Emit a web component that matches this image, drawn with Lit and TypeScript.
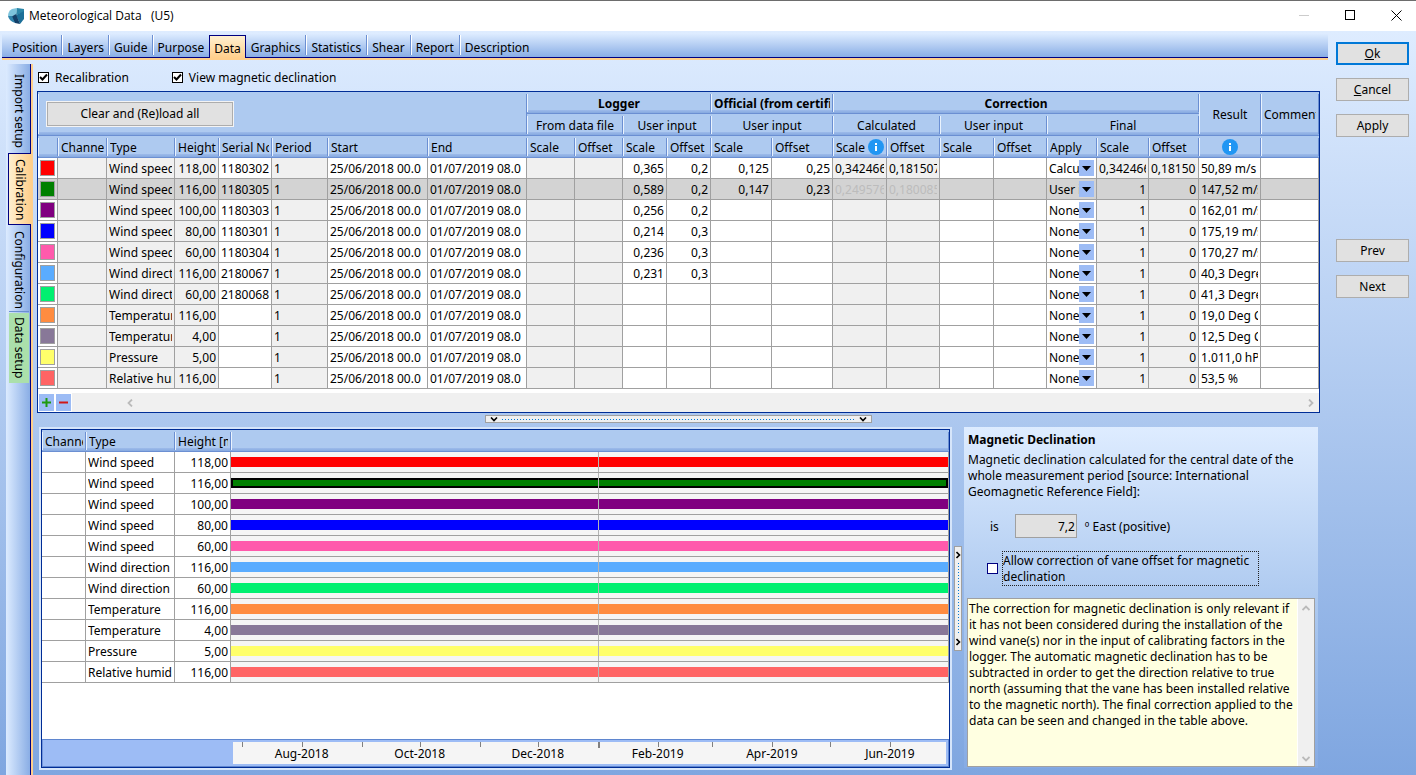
import { LitElement, html, css, svg, nothing } from "lit";
import { customElement, property, state } from "lit/decorators.js";
import { classMap } from "lit/directives/class-map.js";
import { styleMap } from "lit/directives/style-map.js";

interface Signal {
  color: string;
  type: string;
  height: string;
  serial: string;
  input: [string, string];
  official: [string, string];
  calculated: [string, string];
  apply: string;
  final: [string, string];
  result: string;
}

const none: [string, string] = ["", ""];
const unit: [string, string] = ["1", "0"];

const signals: Signal[] = [
  { color: "#ff0000", type: "Wind speed", height: "118,00", serial: "1180302", input: ["0,365", "0,2"], official: ["0,125", "0,25"], calculated: ["0,342466", "0,181507"], apply: "Calculated", final: ["0,342466", "0,181507"], result: "50,89 m/s" },
  { color: "#008000", type: "Wind speed", height: "116,00", serial: "1180305", input: ["0,589", "0,2"], official: ["0,147", "0,23"], calculated: ["0,249576", "0,180085"], apply: "User input", final: unit, result: "147,52 m/s" },
  { color: "#800080", type: "Wind speed", height: "100,00", serial: "1180303", input: ["0,256", "0,2"], official: none, calculated: none, apply: "None", final: unit, result: "162,01 m/s" },
  { color: "#0000ff", type: "Wind speed", height: "80,00", serial: "1180301", input: ["0,214", "0,3"], official: none, calculated: none, apply: "None", final: unit, result: "175,19 m/s" },
  { color: "#ff5aac", type: "Wind speed", height: "60,00", serial: "1180304", input: ["0,236", "0,3"], official: none, calculated: none, apply: "None", final: unit, result: "170,27 m/s" },
  { color: "#5aacff", type: "Wind direction", height: "116,00", serial: "2180067", input: ["0,231", "0,3"], official: none, calculated: none, apply: "None", final: unit, result: "40,3 Degrees" },
  { color: "#00f070", type: "Wind direction", height: "60,00", serial: "2180068", input: none, official: none, calculated: none, apply: "None", final: unit, result: "41,3 Degrees" },
  { color: "#ff8c40", type: "Temperature", height: "116,00", serial: "", input: none, official: none, calculated: none, apply: "None", final: unit, result: "19,0 Deg C" },
  { color: "#887898", type: "Temperature", height: "4,00", serial: "", input: none, official: none, calculated: none, apply: "None", final: unit, result: "12,5 Deg C" },
  { color: "#ffff6a", type: "Pressure", height: "5,00", serial: "", input: none, official: none, calculated: none, apply: "None", final: unit, result: "1.011,0 hPa" },
  { color: "#ff6464", type: "Relative humidity", height: "116,00", serial: "", input: none, official: none, calculated: none, apply: "None", final: unit, result: "53,5 %" },
];

const columnWidths = [20, 49, 68, 44, 53, 56, 100, 99, 48, 48, 44, 44, 61, 61, 54, 53, 54, 53, 50, 52, 50, 62, 58];
const columnTotal = columnWidths.reduce((a, b) => a + b, 0);

const shared = css`
  * { box-sizing: border-box; }
  button, input, select, textarea { font: inherit; color: inherit; margin: 0; border-radius: 0; }
  table { border-collapse: separate; border-spacing: 0; table-layout: fixed; width: 100%; }
  th {
    height: 22px; padding: 1px 3px 0; font-weight: normal; text-align: left; line-height: 16px;
    border-bottom: 1px solid #6b8fd2;
    background:
      linear-gradient(#6b8fd2, #6b8fd2) right 2px / 1px calc(100% - 3px) no-repeat,
      linear-gradient(#eaf3fe, #eaf3fe) left 2px / 1px calc(100% - 3px) no-repeat,
      linear-gradient(#9dbbea, #86a9e0) bottom / 100% 3px no-repeat,
      #aecaf0;
  }
  td {
    height: 21px; padding: 0 2px; line-height: 16px;
    border-right: 1px solid #a0a0a0; border-bottom: 1px solid #a0a0a0; background: #fff;
  }
  .clip { display: block; overflow: hidden; white-space: nowrap; padding-top: 2px; }
  .num { text-align: right; }
`;

const infoIcon = () => html`<svg class="info" width="16" height="16" viewBox="0 0 16 16" role="img" aria-label="Info">
  <circle cx="8" cy="8" r="8" fill="#2196f3" /><rect x="7" y="4" width="2" height="2" fill="#fff" /><rect x="7" y="7" width="2" height="5" fill="#fff" />
</svg>`;

@customElement("calibration-grid")
class CalibrationGrid extends LitElement {
  @property({ type: Number }) selected = 1;

  static styles = [shared, css`
    :host { display: block; border: 1px solid #002d96; background: #fff; }
    .center { text-align: center; }
    .bold { font-weight: bold; }
    .corner { padding: 0 8px; }
    .reload { width: 188px; height: 26px; border: 1px solid #f4f4f4; padding: 1px 0 0; background: #e1e1e1; outline: 1px solid #adadad; outline-offset: -2px; display: block; }
    .grey { background: #f0f0f0; }
    .selected td { background: #d3d3d3; }
    .dim { color: #bcbcbc; }
    .swatch { display: block; width: 15px; height: 16px; border: 1px solid #a0a0a0; }
    .with-info { display: flex; align-items: center; justify-content: space-between; }
    .with-info .clip { min-width: 0; }
    .info { display: block; flex: none; }
    .mid .info { margin: 0 auto; }
    .pick { display: grid; grid-template-columns: 1fr 15px; align-items: center; }
    .pick select { grid-area: 1 / 1 / 2 / 3; width: 100%; height: 20px; line-height: 16px; border: 0; padding: 1px 15px 0 0; background: none; appearance: none; text-overflow: clip; }
    .pick svg { grid-area: 1 / 2; pointer-events: none; }
    .foot { display: flex; align-items: flex-end; padding-top: 4px; background: #fff; }
    .tool { width: 15px; height: 17px; border: 0; padding: 0; margin: 1px 1px; background: #9dbcf5; display: grid; place-items: center; }
    .scroll { flex: 1; height: 19px; background: #f0f0f0; display: flex; justify-content: space-between; align-items: center; padding: 0 5px 0 55px; }
  `];

  private cell(text: string, cls = "") {
    return html`<td class=${cls}><span class="clip">${text}</span></td>`;
  }

  render() {
    const sub = ["", "Channel", "Type", "Height", "Serial No", "Period", "Start", "End", "Scale", "Offset", "Scale", "Offset", "Scale", "Offset", "Scale", "Offset", "Scale", "Offset", "Apply", "Scale", "Offset"];
    return html`
      <table>
        <colgroup>${columnWidths.map((w) => html`<col style=${styleMap({ width: `${(w / columnTotal) * 100}%` })} />`)}</colgroup>
        <thead>
          <tr>
            <th class="corner" colspan="8" rowspan="2"><button class="reload">Clear and (Re)load all</button></th>
            <th class="center bold" colspan="4"><span class="clip">Logger</span></th>
            <th class="bold" colspan="2"><span class="clip">Official (from certificate)</span></th>
            <th class="center bold" colspan="7"><span class="clip">Correction</span></th>
            <th class="center" rowspan="2"><span class="clip">Result</span></th>
            <th rowspan="2"><span class="clip">Comment</span></th>
          </tr>
          <tr>
            <th class="center" colspan="2"><span class="clip">From data file</span></th>
            <th class="center" colspan="2"><span class="clip">User input</span></th>
            <th class="center" colspan="2"><span class="clip">User input</span></th>
            <th class="center" colspan="2"><span class="clip">Calculated</span></th>
            <th class="center" colspan="2"><span class="clip">User input</span></th>
            <th class="center" colspan="3"><span class="clip">Final</span></th>
          </tr>
          <tr>
            ${sub.map((name, i) => i === 14
              ? html`<th><div class="with-info"><span class="clip">${name}</span>${infoIcon()}</div></th>`
              : html`<th><span class="clip">${name}</span></th>`)}
            <th class="mid">${infoIcon()}</th>
            <th></th>
          </tr>
        </thead>
        <tbody>
          ${signals.map((s, i) => html`
            <tr class=${classMap({ selected: i === this.selected })}>
              <td><span class="swatch" style=${styleMap({ background: s.color })}></span></td>
              ${this.cell("", "grey")}
              ${this.cell(s.type, "grey")}
              ${this.cell(s.height, "grey num")}
              ${this.cell(s.serial)}
              ${this.cell("1", "grey")}
              ${this.cell("25/06/2018 00.0")}
              ${this.cell("01/07/2019 08.0")}
              ${this.cell("", "grey")}
              ${this.cell("", "grey")}
              ${s.input.map((v) => this.cell(v, "num"))}
              ${s.official.map((v) => this.cell(v, "num"))}
              ${s.calculated.map((v) => this.cell(v, s.apply === "User input" ? "grey num dim" : "grey num"))}
              ${this.cell("")}
              ${this.cell("")}
              <td>
                <div class="pick">
                  <select aria-label="Apply" .value=${s.apply}>
                    ${["None", "Calculated", "User input"].map((o) => html`<option ?selected=${o === s.apply}>${o}</option>`)}
                  </select>
                  <svg width="15" height="16" viewBox="0 0 15 16"><rect width="15" height="16" fill="#9dbcf5" /><path d="M3 6h9L7.500 11z" fill="#000" /></svg>
                </div>
              </td>
              ${s.final.map((v) => this.cell(v, "grey num"))}
              ${this.cell(s.result)}
              ${this.cell("")}
            </tr>`)}
        </tbody>
      </table>
      <div class="foot">
        <button class="tool" aria-label="Add row"><svg width="9" height="9" viewBox="0 0 9 9"><path d="M4.500 0v9M0 4.500h9" stroke="#1f9a10" stroke-width="2" /></svg></button>
        <button class="tool" aria-label="Remove row"><svg width="9" height="9" viewBox="0 0 9 9"><path d="M0 4.500h9" stroke="#d01818" stroke-width="2" /></svg></button>
        <div class="scroll">
          <svg width="6" height="8" viewBox="0 0 6 8"><path d="M5 0.500L1.500 4L5 7.500" fill="none" stroke="#bababa" stroke-width="1.800" /></svg>
          <svg width="6" height="8" viewBox="0 0 6 8"><path d="M1 0.500L4.500 4L1 7.500" fill="none" stroke="#bababa" stroke-width="1.800" /></svg>
        </div>
      </div>`;
  }
}

const day = 86400000;
const dataStart = Date.UTC(2018, 5, 25);
const dataEnd = Date.UTC(2019, 6, 1);
const axisStart = dataStart + 1.5 * day;
const axisEnd = dataEnd - day;
const share = (t: number, from: number, to: number) => `${((t - from) / (to - from)) * 100}%`;

@customElement("signal-timeline")
class SignalTimeline extends LitElement {
  @property({ type: Number }) selected = 1;

  static styles = [shared, css`
    :host { display: flex; flex-direction: column; border: 1px solid #002d96; background: #fff; outline: 2px solid #d6e5fa; min-width: 0; }
    .c1 { width: 44px; } .c2 { width: 89px; } .c3 { width: 56px; }
    .track { padding: 0; background: #f5f5f5; }
    .lane { position: relative; height: 20px; padding: 5px 0; }
    .bar { height: 10px; }
    .bar.picked { border: 2px solid #000; }
    .year { position: absolute; top: 0; bottom: 0; width: 1px; background: #b4b4b4; }
    .axis { margin-top: auto; height: 28px; padding: 2px 2px 2px 190px; border: 1px solid #5f86cf; border-left-color: #7396dc; background: #9dbcf5; }
    .scale { position: relative; height: 22px; background: #f5f5f5; }
    .tick { position: absolute; top: 0; width: 1px; height: 5px; background: #808080; }
    .tick.major { width: 2px; height: 6px; }
    .month { position: absolute; top: 4px; line-height: 16px; transform: translateX(-50%); }
  `];

  render() {
    const months = Array.from({ length: 12 }, (_, i) => new Date(Date.UTC(2018, 6 + i, 1)));
    const label = (d: Date) => `${["Jan", "Feb", "Mar", "Apr", "May", "Jun", "Jul", "Aug", "Sep", "Oct", "Nov", "Dec"][d.getUTCMonth()]}-${d.getUTCFullYear()}`;
    const newYear = { left: share(Date.UTC(2019, 0, 1), dataStart, dataEnd) };
    return html`
      <table>
        <colgroup><col class="c1" /><col class="c2" /><col class="c3" /><col /></colgroup>
        <thead><tr>
          <th><span class="clip">Channel</span></th><th><span class="clip">Type</span></th><th><span class="clip">Height [m]</span></th><th></th>
        </tr></thead>
        <tbody>
          ${signals.map((s, i) => html`<tr>
            <td></td>
            <td><span class="clip">${s.type}</span></td>
            <td class="num"><span class="clip">${s.height}</span></td>
            <td class="track"><div class="lane">
              <div class=${classMap({ bar: true, picked: i === this.selected })} style=${styleMap({ background: s.color })}></div>
              <div class="year" style=${styleMap(newYear)}></div>
            </div></td>
          </tr>`)}
        </tbody>
      </table>
      <div class="axis"><div class="scale">
        ${months.map((m, i) => html`
          <span class=${classMap({ tick: true, major: m.getUTCMonth() === 0 })} style=${styleMap({ left: share(+m, axisStart, axisEnd) })}></span>
          ${i % 2 ? html`<span class="month" style=${styleMap({ left: share(+m, axisStart, axisEnd) })}>${label(m)}</span>` : nothing}`)}
      </div></div>`;
  }
}

@customElement("declination-panel")
class DeclinationPanel extends LitElement {
  static styles = [shared, css`
    :host { display: flex; flex-direction: column; padding: 5px 3px 1px; line-height: 16px; background: linear-gradient(#deecff, #aecaf0 50%, #86abe4); }
    .title { margin: 0; padding: 0 1px; font: inherit; font-weight: bold; }
    .lead { margin: 4px 0 0; padding: 0 1px; max-width: 340px; }
    .value { display: flex; align-items: center; margin-top: 14px; padding-left: 23px; }
    .value label, .value span { padding-top: 2px; }
    .value input { width: 62px; height: 24px; margin: 0 8px 0 16px; padding: 0 1px; text-align: right; border: 1px solid #a0a0a0; background: #e1e1e1; }
    .allow { display: flex; align-items: center; gap: 4px; margin: 13px 0 0 20px; width: 272px; }
    .allow input { appearance: none; flex: none; width: 11px; height: 11px; border: 1px solid #000080; background: #fff; }
    .allow span { flex: 1; padding-top: 1px; border: 1px dotted #202020; }
    .note { flex: 1; min-height: 120px; display: flex; margin-top: 12px; border: 1px solid #a0a0a0; }
    .note textarea { flex: 1; min-width: 0; resize: none; border: 0; outline: 0; padding: 2px 0 0 1px; overflow: hidden; background: #ffffe1; }
    .rail { width: 17px; padding: 6px 0 4px; background: #f0f0f0; border-left: 1px solid #fff; display: flex; flex-direction: column; justify-content: space-between; align-items: center; }
  `];

  render() {
    const note = "The correction for magnetic declination is only relevant if it has not been considered during the installation of the wind vane(s) nor in the input of calibrating factors in the logger. The automatic magnetic declination has to be subtracted in order to get the direction relative to true north (assuming that the vane has been installed relative to the magnetic north). The final correction applied to the data can be seen and changed in the table above.";
    return html`
      <h2 class="title">Magnetic Declination</h2>
      <p class="lead">Magnetic declination calculated for the central date of the whole measurement period [source: International Geomagnetic Reference Field]:</p>
      <div class="value"><label for="decl">is</label><input id="decl" value="7,2" readonly /><span>º East (positive)</span></div>
      <label class="allow"><input type="checkbox" /><span>Allow correction of vane offset for magnetic declination</span></label>
      <div class="note">
        <textarea readonly aria-label="Note on magnetic declination" .value=${note}></textarea>
        <div class="rail">
          <svg width="8" height="6" viewBox="0 0 8 6"><path d="M0.500 5L4 1.500L7.500 5" fill="none" stroke="#bababa" stroke-width="1.800" /></svg>
          <svg width="8" height="6" viewBox="0 0 8 6"><path d="M0.500 1L4 4.500L7.500 1" fill="none" stroke="#bababa" stroke-width="1.800" /></svg>
        </div>
      </div>`;
  }
}

@customElement("app-root")
class AppRoot extends LitElement {
  @state() private tab = "Data";
  @state() private side = "Calibration";

  static styles = [shared, css`
    :host { display: flex; flex-direction: column; min-height: 100vh; box-sizing: border-box; border-top: 1px solid #6d6d6d; font-family: "Noto Sans", "DejaVu Sans Condensed", sans-serif; font-size: 12px; line-height: 16px; color: #000; }
    .titlebar { display: flex; align-items: center; height: 30px; padding-left: 8px; background: #fff; }
    .caption { margin: 0 auto 0 4px; font: 12px/16px "Open Sans", "Noto Sans", sans-serif; white-space: pre; }
    .win { width: 40px; height: 30px; padding: 0 0 2px; border: 0; background: none; display: grid; place-items: center; margin-left: 6px; }
    .body { flex: 1; display: flex; background: linear-gradient(#deecff, #7fa6e0); }
    .main { flex: 1; min-width: 0; display: flex; flex-direction: column; padding: 3px 0 0 2px; }
    .tabs { display: flex; align-items: flex-end; height: 26px; padding-left: 5px; border-bottom: 2px solid #ffcf8c; background: linear-gradient(#000080, #000080) bottom / 100% 1px no-repeat, linear-gradient(#dcebff, #86abe4); }
    .tab { height: 20px; margin-bottom: 3px; padding: 5px 4px 0 5px; border: 0; border-right: 1px solid #6b8fd2; box-shadow: 1px 0 #fff; background: none; white-space: nowrap; line-height: 15px; }
    .tab.on ~ .tab { padding-right: 5px; }
    .tab:last-child, .tab.pre { border-right-color: transparent; box-shadow: none; }
    .tab.on { height: 23px; margin: 0; border: 1px solid #000080; border-bottom: 0; box-shadow: none; background: linear-gradient(#fff0d0, #ffcf8c); padding: 3px 4px 0; }
    .work { flex: 1; display: flex; }
    .side { flex: none; width: 27px; margin: 4px 0 0 4px; display: flex; flex-direction: column; align-items: flex-start; border-right: 2px solid #ffcf8c; background: linear-gradient(#000080, #000080) right / 1px 100% no-repeat, linear-gradient(90deg, #dcebff, #86abe4); }
    .vtab { writing-mode: vertical-rl; width: 20px; margin-left: 3px; padding: 6px 0; border: 0; background: none; line-height: 16px; text-align: left; white-space: nowrap; }
    .vtab.first { height: 89px; padding-top: 10px; }
    .vtab.third { height: 87px; border-bottom: 1px solid #6b8fd2; }
    .vtab.on { width: 23px; height: 72px; margin-left: 2px; padding: 5px 0; border: 1px solid #000080; border-right: 0; background: linear-gradient(90deg, #fff0d0, #ffcf8c); }
    .vtab.green { height: 70px; margin-top: 1px; padding: 4px 0; background: #abe0ab; }
    .content { flex: 1; min-width: 0; display: flex; flex-direction: column; padding: 9px 8px 7px 4px; }
    .checks { display: flex; gap: 42px; height: 22px; }
    .check { display: flex; height: 17px; align-items: center; gap: 6px; }
    .check input { appearance: none; width: 11px; height: 11px; margin: 0 0 0 1px; border: 1px solid #000; background: #fff; }
    .check input:checked { background: #fff url("data:image/svg+xml,%3Csvg xmlns='http://www.w3.org/2000/svg' viewBox='0 0 9 9'%3E%3Cpath d='M1 4l2.500 2.500L8 1.500' fill='none' stroke='%23000' stroke-width='2'/%3E%3C/svg%3E") center / 9px 9px no-repeat; }
    .hsplit { display: flex; justify-content: center; height: 16px; padding: 2px 0 6px; }
    .grip { display: flex; align-items: center; gap: 4px; width: 387px; height: 8px; padding: 0 4px; border: 1px solid #a0a0a0; background: #f0f0f0; }
    .dots { flex: 1; height: 1px; background: repeating-linear-gradient(90deg, #0078d7 0 1px, transparent 1px 3px); }
    .lower { flex: 1; display: flex; padding-right: 2px; }
    .lower signal-timeline { flex: 1; margin-left: 4px; }
    .lower declination-panel { width: 354px; margin-top: -2px; }
    .vsplit { width: 14px; display: flex; align-items: center; padding: 0 2px 0 4px; }
    .vgrip { display: flex; flex-direction: column; align-items: center; gap: 4px; width: 8px; height: 105px; padding: 4px 0; border: 1px solid #a0a0a0; background: #f0f0f0; }
    .vdots { flex: 1; width: 1px; background: repeating-linear-gradient(#0078d7 0 1px, transparent 1px 3px); }
    .actions { width: 88px; padding: 11px 7px 0 8px; display: flex; flex-direction: column; gap: 13px; }
    .act { height: 23px; border: 1px solid #adadad; padding: 0; background: #e1e1e1; line-height: 16px; }
    .act.ok { border: 2px solid #0078d7; }
    .act.prev { margin-top: 89px; }
  `];

  render() {
    const tabs = ["Position", "Layers", "Guide", "Purpose", "Data", "Graphics", "Statistics", "Shear", "Report", "Description"];
    const sides: [string, string][] = [["Import setup", "first"], ["Calibration", ""], ["Configuration", "third"], ["Data setup", "green"]];
    return html`
      <header class="titlebar">
        <svg width="17" height="17" viewBox="0 0 17 17">
          <path d="M4 1L9 0L8 6L4 9L0 8Q0 3 4 1z" fill="#7cc3dc" /><path d="M9 0L16 1V4L8 7z" fill="#2b86a8" />
          <path d="M16 3V11L12 16L8 7z" fill="#1c6f98" /><path d="M8 6L12 16L7 15L3 9z" fill="#123f68" /><path d="M0 8L4 8L7 15Q1 13 0 8z" fill="#2f83ab" />
        </svg>
        <span class="caption">Meteorological Data   (U5)</span>
        <button class="win" aria-label="Minimize"><svg width="11" height="11"><path d="M0 5.500h10" stroke="#ccc" /></svg></button>
        <button class="win" aria-label="Maximize"><svg width="11" height="11"><rect x="0.500" y="0.500" width="9" height="9" fill="none" stroke="#000" /></svg></button>
        <button class="win" aria-label="Close"><svg width="11" height="11"><path d="M0.500 0.500l10 10M10.500 0.500l-10 10" stroke="#000" /></svg></button>
      </header>
      <div class="body">
        <main class="main">
          <nav class="tabs">
            ${tabs.map((t, i) => html`<button class=${classMap({ tab: true, on: t === this.tab, pre: tabs[i + 1] === this.tab })} @click=${() => (this.tab = t)}>${t}</button>`)}
          </nav>
          <div class="work">
            <nav class="side">
              ${sides.map(([t, c]) => html`<button class="vtab ${c} ${t === this.side ? "on" : ""}" @click=${() => (this.side = t)}>${t}</button>`)}
            </nav>
            <section class="content">
              <div class="checks">
                <label class="check"><input type="checkbox" checked />Recalibration</label>
                <label class="check"><input type="checkbox" checked />View magnetic declination</label>
              </div>
              <calibration-grid></calibration-grid>
              <div class="hsplit"><div class="grip">
                ${this.chevron(false)}<span class="dots"></span>${this.chevron(false)}
              </div></div>
              <div class="lower">
                <signal-timeline></signal-timeline>
                <div class="vsplit"><div class="vgrip">
                  ${this.chevron(true)}<span class="vdots"></span>${this.chevron(true)}
                </div></div>
                <declination-panel></declination-panel>
              </div>
            </section>
          </div>
        </main>
        <aside class="actions">
          <button class="act ok"><u>O</u>k</button>
          <button class="act"><u>C</u>ancel</button>
          <button class="act">Apply</button>
          <button class="act prev">Prev</button>
          <button class="act">Next</button>
        </aside>
      </div>`;
  }

  private chevron(right: boolean) {
    return right
      ? html`<svg width="5" height="8" viewBox="0 0 5 8">${svg`<path d="M0.500 1L3.500 4L0.500 7" fill="none" stroke="#000" stroke-width="1.600" />`}</svg>`
      : html`<svg width="8" height="5" viewBox="0 0 8 5">${svg`<path d="M1 0.500L4 3.500L7 0.500" fill="none" stroke="#000" stroke-width="1.600" />`}</svg>`;
  }
}
